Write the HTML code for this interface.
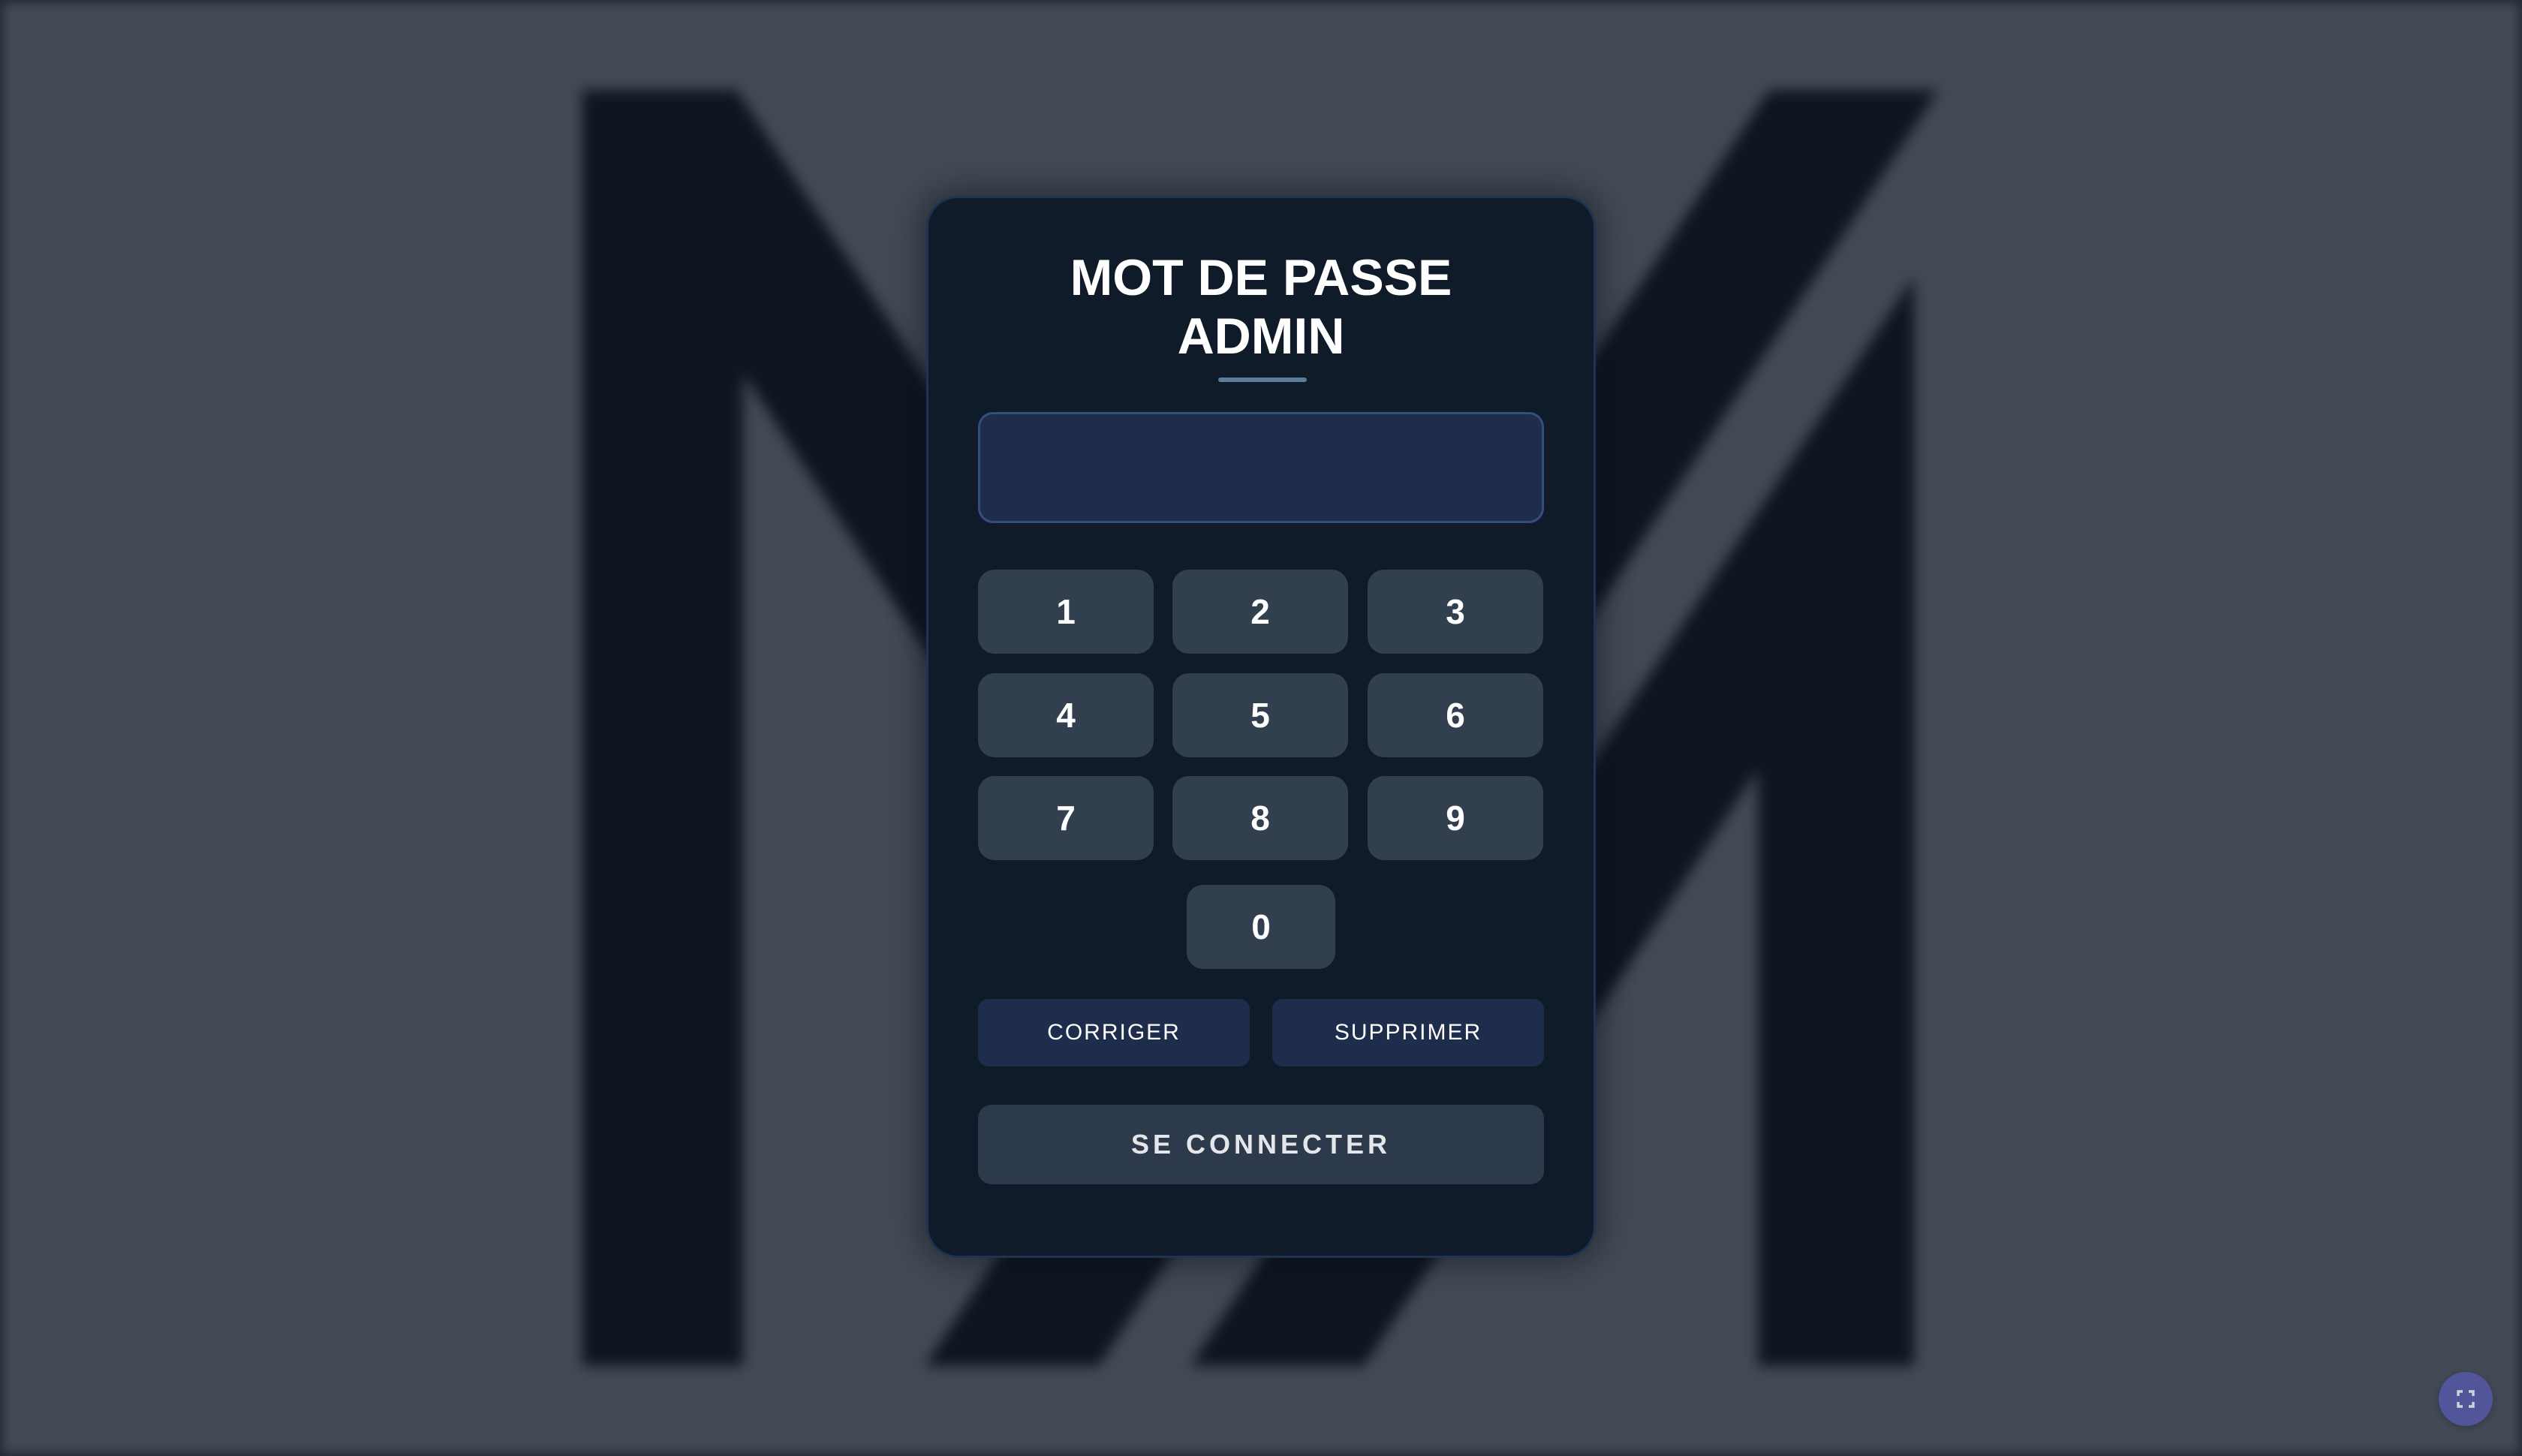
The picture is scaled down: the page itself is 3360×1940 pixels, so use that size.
<!DOCTYPE html>
<html><head><meta charset="utf-8"><style>
*{margin:0;padding:0;box-sizing:border-box}
html,body{width:3360px;height:1940px;overflow:hidden;background:#434a56;font-family:"Liberation Sans",sans-serif}
.bg{position:absolute;left:0;top:0;width:3360px;height:1940px;filter:blur(9px)}
.vig{position:absolute;inset:0;box-shadow:inset 0 0 14px 4px rgba(20,25,35,.7)}
.card{position:absolute;left:1234px;top:261px;width:892px;height:1415px;background:#101b2a;border:3px solid #1f3450;border-radius:42px;box-shadow:0 0 40px 10px rgba(10,15,25,.45)}
.t{position:absolute;left:0;width:100%;text-align:center;color:#fff;font-weight:bold;font-size:68px;letter-spacing:0px;line-height:78px;top:67px}
.ul{position:absolute;left:386px;top:239px;width:118px;height:6px;border-radius:3px;background:#5a7d99}
.inp{position:absolute;left:66px;top:285px;width:754px;height:148px;background:#1e2d4a;border:3px solid #34507a;border-radius:20px}
.k{position:absolute;width:234px;height:112px;background:#323f4f;border-radius:22px;color:#fff;font-weight:bold;font-size:46px;display:flex;align-items:center;justify-content:center}
.b{position:absolute;top:1067px;width:362px;height:90px;background:#1e2d4c;border-radius:14px;color:#fff;font-size:30px;letter-spacing:2px;display:flex;align-items:center;justify-content:center}
.c{position:absolute;left:66px;top:1208px;width:754px;height:106px;background:#2d3a4b;border-radius:18px;color:#e4e6ea;font-weight:bold;font-size:36px;letter-spacing:5px;display:flex;align-items:center;justify-content:center}
.fs{position:absolute;left:3249px;top:1828px;width:72px;height:72px;border-radius:50%;background:#52559a;box-shadow:0 2px 10px rgba(0,0,0,.25)}
</style></head><body>
<svg class="bg" viewBox="0 0 1568 905" preserveAspectRatio="none">
<g fill="#0e1520">
<polygon points="362,56 458,56 883,700 771,700 462,232 462,849 362,849"/>
<polygon points="1100,56 1205,56 683,849 575,849"/>
<polygon points="1190,172 1190,849 1093,849 1093,478 848,849 740,849"/>
</g></svg>
<div class="vig"></div>
<div class="card">
<div class="t">MOT DE PASSE<br>ADMIN</div>
<div class="ul"></div>
<div class="inp"></div>
<div class="k" style="left:66px;top:495px">1</div>
<div class="k" style="left:325px;top:495px">2</div>
<div class="k" style="left:585px;top:495px">3</div>
<div class="k" style="left:66px;top:633px">4</div>
<div class="k" style="left:325px;top:633px">5</div>
<div class="k" style="left:585px;top:633px">6</div>
<div class="k" style="left:66px;top:770px">7</div>
<div class="k" style="left:325px;top:770px">8</div>
<div class="k" style="left:585px;top:770px">9</div>
<div class="k" style="left:344px;top:915px;width:198px">0</div>
<div class="b" style="left:66px">CORRIGER</div>
<div class="b" style="left:458px">SUPPRIMER</div>
<div class="c">SE CONNECTER</div>
</div>
<div class="fs"><svg width="72" height="72" viewBox="0 0 72 72"><path d="M26 32v-6h6M40 26h6v6M46 40v6h-6M32 46h-6v-6" fill="none" stroke="#d0d2dc" stroke-width="3.5"/></svg></div>
</body></html>
